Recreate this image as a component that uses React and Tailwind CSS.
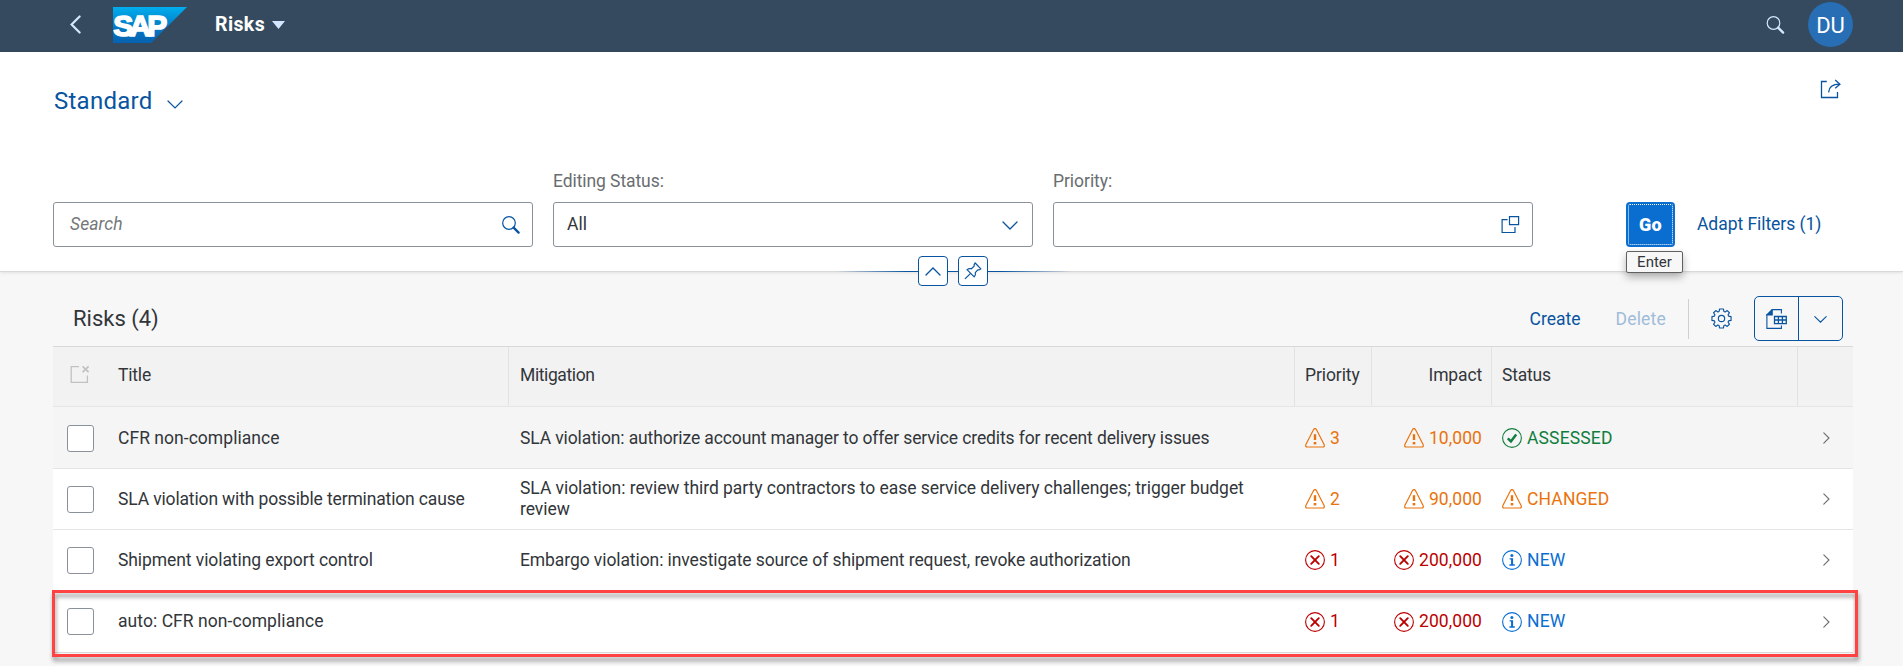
const COLS = "grid grid-cols-[65px_391px_786px_77px_120px_306px_55px]";

function SearchIcon({ className }) {
  return (
    <svg viewBox="0 0 18 18" className={className} fill="none" stroke="currentColor">
      <circle cx="7" cy="7" r="6.3" strokeWidth="1.2" />
      <path d="M11.6 11.6 16.6 16.6" strokeWidth="2.3" strokeLinecap="round" />
    </svg>
  );
}

function Chevron({ className, d = "M1 1 8 8 15 1", box = "0 0 16 9", width = 1.3 }) {
  return (
    <svg viewBox={box} className={className} fill="none" stroke="currentColor" strokeWidth={width} strokeLinecap="round">
      <path d={d} />
    </svg>
  );
}

function SapLogo() {
  return (
    <svg viewBox="0 0 74 36" className="ml-[32px] mt-px h-[36px] w-[74px]">
      <defs>
        <linearGradient id="sap" x1="0" y1="0" x2="0" y2="1">
          <stop offset="0" stopColor="#00aeef" />
          <stop offset="0.25" stopColor="#0297db" />
          <stop offset="0.6" stopColor="#0677c4" />
          <stop offset="1" stopColor="#0662b0" />
        </linearGradient>
      </defs>
      <path d="M0 0H74L38 36H0Z" fill="url(#sap)" />
      <text x="0.2" y="28.6" fill="#fff" stroke="#fff" strokeWidth="1.6" fontFamily="Liberation Sans, sans-serif" fontWeight="700" fontSize="30" textLength="54" lengthAdjust="spacing">SAP</text>
    </svg>
  );
}

function WarningIcon() {
  return (
    <svg viewBox="0 0 20 20" className="size-[20px] shrink-0" fill="none" stroke="currentColor">
      <path d="M8.7 1.3Q10 -0.2 11.3 1.3L19.1 16.6Q19.9 19 17.8 19H2.2Q0.1 19 0.9 16.6Z" strokeWidth="1.2" />
      <path d="M10 6.2V12" strokeWidth="2.4" />
      <path d="M10 14V16.4" strokeWidth="2.6" />
    </svg>
  );
}

function ErrorIcon() {
  return (
    <svg viewBox="0 0 20 20" className="size-[20px] shrink-0" fill="none" stroke="currentColor">
      <circle cx="10" cy="10" r="9.4" strokeWidth="1.1" />
      <path d="M6.2 6.2 13.8 13.8M13.8 6.2 6.2 13.8" strokeWidth="1.9" strokeLinecap="round" />
    </svg>
  );
}

function SuccessIcon() {
  return (
    <svg viewBox="0 0 20 20" className="size-[20px] shrink-0" fill="none" stroke="currentColor">
      <circle cx="10" cy="10" r="9.4" strokeWidth="1.1" />
      <path d="M5.8 10.4 8.9 13.4 14.2 6.4" strokeWidth="2.5" />
    </svg>
  );
}

function InfoIcon() {
  return (
    <svg viewBox="0 0 20 20" className="size-[20px] shrink-0" fill="none" stroke="currentColor">
      <circle cx="10" cy="10" r="9.4" strokeWidth="1.1" />
      <circle cx="9.9" cy="5.6" r="1.5" fill="currentColor" stroke="none" />
      <path d="M7.6 8.9H10.2V14.6M7.4 15H12.8" strokeWidth="1.3" />
      <path d="M10.1 8.6V15" strokeWidth="2" />
    </svg>
  );
}

function ValueHelpIcon() {
  return (
    <svg viewBox="0 0 19 18" className="h-[18px] w-[19px]" fill="none" stroke="currentColor" strokeWidth="1.2">
      <path d="M8.5 0.6H17.6V8.6H8.5Z" />
      <path d="M6.6 3.6H1.1V16.5H14V11" />
    </svg>
  );
}

function ShareIcon() {
  return (
    <svg viewBox="0 0 22 20" className="h-[20px] w-[22px]" fill="none" stroke="currentColor" strokeWidth="1.3">
      <path d="M6.8 2.5H1.5V18.5H17.5V13" />
      <path d="M8.6 13.4Q9 5.2 19.6 5.2" />
      <path d="M15.2 1 19.9 5.2 15.2 9.2" />
    </svg>
  );
}

function PinIcon() {
  return (
    <svg viewBox="0 0 18 18" className="size-[18px]" fill="none" stroke="currentColor" strokeWidth="1.2" strokeLinejoin="round">
      <path d="M11.2 1 16.8 6.8Q15.2 8.4 13.8 7.8L11.3 10.6Q12 13 10.2 14.8L3 7.6Q5 6 7.4 6.8L10.2 4.1Q9.6 2.4 11.2 1Z" />
      <path d="M6.6 11.3 1 16.9" />
    </svg>
  );
}

function GearIcon() {
  return (
    <svg viewBox="0 0 22 22" className="size-[21px]" fill="none" stroke="currentColor" strokeWidth="1.2" strokeLinejoin="round">
      <path d="M9 1H13L13.5 3.6 14.8 4.1 17 2.7 19.3 5 17.9 7.2 18.4 8.5 21 9V13L18.4 13.5 17.9 14.8 19.3 17 17 19.3 14.8 17.9 13.5 18.4 13 21H9L8.5 18.4 7.2 17.9 5 19.3 2.7 17 4.1 14.8 3.6 13.5 1 13V9L3.6 8.5 4.1 7.2 2.7 5 5 2.7 7.2 4.1 8.5 3.6Z" />
      <circle cx="11" cy="11" r="3.3" />
    </svg>
  );
}

function ExportIcon() {
  return (
    <svg viewBox="0 0 21 20" className="h-[20px] w-[21px]" fill="none" stroke="currentColor" strokeWidth="1.1">
      <path d="M5.6 0.6H15.4V4.6M0.9 5V19.4H15.4V16.4" />
      <path d="M0.4 6.4V5.4L5.6 0.2H6.8V6.4Z" fill="currentColor" stroke="none" />
      <path d="M8.5 7.5H20.3V14.6H8.5ZM8.5 11H20.3M12.4 7.5V14.6M16.4 7.5V14.6" strokeWidth="1.3" />
    </svg>
  );
}

function DeselectIcon() {
  return (
    <svg viewBox="0 0 20 19" className="h-[19px] w-[20px]" fill="none" stroke="currentColor" strokeWidth="1.3">
      <path d="M9 1.6H1.2V17.4H17.4V10.5" />
      <path d="M12.6 1.4 18.6 7.2M18.6 1.4 12.6 7.2" strokeWidth="1.7" />
    </svg>
  );
}

const STATES = {
  warning: { Icon: WarningIcon, color: "text-[#e9730c]" },
  error: { Icon: ErrorIcon, color: "text-[#bb0000]" },
  success: { Icon: SuccessIcon, color: "text-[#107e3e]" },
  info: { Icon: InfoIcon, color: "text-[#0a6ed1]" },
};

function ObjectStatus({ state, children, className = "" }) {
  const { Icon, color } = STATES[state];
  return (
    <span className={`flex items-center gap-[5px] ${color} ${className}`}>
      <Icon />
      <span>{children}</span>
    </span>
  );
}

const ROWS = [
  { title: "CFR non-compliance", titleCls: "tracking-[0.04px]", mitigation: "SLA violation: authorize account manager to offer service credits for recent delivery issues", mitCls: "tracking-[-0.12px]", level: "warning", priority: "3", impact: "10,000", state: "success", status: "ASSESSED", row: "h-[62px] bg-[#f5f5f5] border-[#e5e5e5] pt-px" },
  { title: "SLA violation with possible termination cause", titleCls: "tracking-[-0.15px]", mitigation: "SLA violation: review third party contractors to ease service delivery challenges; trigger budget review", mitCls: "tracking-[-0.05px]", level: "warning", priority: "2", impact: "90,000", state: "warning", status: "CHANGED", row: "h-[61px] bg-white border-[#e5e5e5]" },
  { title: "Shipment violating export control", titleCls: "tracking-[-0.08px]", mitigation: "Embargo violation: investigate source of shipment request, revoke authorization", mitCls: "tracking-[-0.09px]", level: "error", priority: "1", impact: "200,000", state: "info", status: "NEW", row: "h-[61px] bg-white border-[#e5e5e5]" },
  { title: "auto: CFR non-compliance", titleCls: "tracking-[0.06px]", mitigation: "", mitCls: "", level: "error", priority: "1", impact: "200,000", state: "info", status: "NEW", row: "h-[62px] bg-white border-[#d9d9d9]" },
];

function TableRow({ r }) {
  return (
    <div className={`${COLS} items-center border-b ${r.row}`}>
      <div className="pl-[14px]">
        <div className="size-[27px] rounded-[3px] border border-[#89919a] bg-white" />
      </div>
      <div className={r.titleCls}>{r.title}</div>
      <div className={`pl-[11px] pr-[30px] leading-[21px] ${r.mitCls}`}>{r.mitigation}</div>
      <ObjectStatus state={r.level} className="pl-[10px]">{r.priority}</ObjectStatus>
      <ObjectStatus state={r.level} className="justify-end pr-[10px] tracking-[0.08px]">{r.impact}</ObjectStatus>
      <ObjectStatus state={r.state} className="pl-[10px] tracking-[0.15px]">{r.status}</ObjectStatus>
      <div className="pl-[25px] text-[#6a6d70]">
        <Chevron className="h-[12px] w-[7px]" box="0 0 7 12" d="M0.8 0.8 6 6 0.8 11.2" width={1.1} />
      </div>
    </div>
  );
}

function Field({ label, children, labelCls = "" }) {
  return (
    <div className="w-[480px]">
      <div className={`h-[31px] leading-[20px] text-[#6a6d70] ${labelCls}`}>{label}</div>
      <div className="flex h-[45px] items-center justify-between rounded-[3px] border border-[#89919a] bg-white">{children}</div>
    </div>
  );
}

export default function App() {
  return (
    <div className="h-[666px] w-[1903px] overflow-hidden bg-[#f7f7f7] font-[Roboto,sans-serif] text-[17.5px] leading-[21px] text-[#32363a]">
      <header className="flex h-[52px] items-center bg-[#354a5f] pb-[3px] text-white">
        <Chevron className="ml-[70px] h-[19px] w-[11px] text-[#d1e8ff]" box="0 0 11 19" d="M9.6 1.5 1.6 9.5 9.6 17.5" width={2.2} />
        <SapLogo />
        <span className="ml-[28px] text-[19.5px] font-bold tracking-[0.4px]">Risks</span>
        <svg viewBox="0 0 13 8" className="ml-[7px] h-[8px] w-[13px] fill-[#d1e8ff]"><path d="M0 0H13L6.5 8Z" /></svg>
        <SearchIcon className="ml-auto h-[18px] w-[19px] text-[#d1e8ff]" />
        <div className="ml-[23px] mr-[50px] flex size-[45px] items-center justify-center rounded-full bg-[#286eb4] pt-px text-[22px]">DU</div>
      </header>

      <section className="relative h-[219px] bg-white shadow-[0_1px_0_#d9d9d9,0_1px_4px_rgba(0,0,0,0.14)]">
        <div className="flex h-[98px] items-center pl-[54px] pr-[61px] text-[#0854a0]">
          <span className="text-[24px] tracking-[0.25px]">Standard</span>
          <Chevron className="ml-[15px] mt-[6px] h-[9px] w-[16px]" width={1.2} />
          <div className="ml-auto mb-[25px]"><ShareIcon /></div>
        </div>
        <div className="flex h-[97px] items-end gap-[20px] pl-[53px]">
          <Field label="">
            <span className="pl-[16px] italic tracking-[0.1px] text-[#74777a]">Search</span>
            <SearchIcon className="mr-[12px] size-[18px] text-[#0854a0]" />
          </Field>
          <Field label="Editing Status:" labelCls="tracking-[-0.08px]">
            <span className="pl-[13px]">All</span>
            <Chevron className="mr-[14px] mt-px h-[9px] w-[16px] text-[#0854a0]" />
          </Field>
          <Field label="Priority:" labelCls="tracking-[-0.05px]">
            <span />
            <span className="mr-[12px] text-[#0854a0]"><ValueHelpIcon /></span>
          </Field>
          <div className="ml-[73px] h-[45px] w-[49px] rounded-[4px] bg-[#0a6ed1] p-[2px]">
            <div className="flex h-full items-center justify-center rounded-[2px] border border-dotted border-white text-[18px] font-black tracking-[0.4px] text-white">Go</div>
          </div>
          <span className="ml-[2px] flex h-[45px] items-center tracking-[-0.05px] text-[#0854a0]">Adapt Filters (1)</span>
        </div>
        <div className="absolute left-[836px] top-[219px] h-px w-[236px] bg-[linear-gradient(90deg,transparent,#0854a0_30%,#0854a0_70%,transparent)]" />
        <div className="absolute left-[918px] top-[204px] flex gap-[10px] text-[#0854a0]">
          <div className="flex size-[30px] items-center justify-center rounded-[4px] border border-[#0854a0] bg-white">
            <Chevron className="h-[9px] w-[16px]" d="M1 8 8 1 15 8" />
          </div>
          <div className="flex size-[30px] items-center justify-center rounded-[4px] border border-[#0854a0] bg-white"><PinIcon /></div>
        </div>
        <div className="absolute left-[1626px] top-[199px] flex h-[22px] w-[57px] items-center justify-center rounded-[2px] border border-[#606060] bg-[#f7f7f7] text-[15px] shadow-[0_4px_8px_rgba(0,0,0,0.3)]">Enter</div>
      </section>

      <main className="mx-[53px] mt-[20px] w-[1800px]">
        <div className="flex h-[55px] items-center pl-[20px] pr-[10px] text-[#0854a0]">
          <h1 className="text-[22px] text-[#32363a]">Risks (4)</h1>
          <span className="ml-auto pt-px">Create</span>
          <span className="ml-[35px] pt-px tracking-[0.2px] text-[#9fbcd9]">Delete</span>
          <div className="ml-[22px] h-[40px] w-px bg-[#d0d0d0]" />
          <span className="ml-[22px]"><GearIcon /></span>
          <div className="ml-[22px] flex h-[45px] w-[89px] rounded-[5px] border border-[#0854a0]">
            <div className="flex w-[44px] items-center justify-center border-r border-[#0854a0]"><ExportIcon /></div>
            <div className="flex flex-1 items-center justify-center pt-[2px]">
              <Chevron className="h-[7px] w-[13px]" box="0 0 13 7" d="M0.8 0.6 6.5 6.2 12.2 0.6" width={1.1} />
            </div>
          </div>
        </div>
        <div className="relative">
          <div className={`${COLS} h-[61px] border-y border-b-[#e5e5e5] border-t-[#d9d9d9] bg-[#f2f2f2]`}>
            <div className="flex items-center pb-[5px] pl-[17px] text-[#bfc1c3]"><DeselectIcon /></div>
            <div className="flex items-center border-r border-[#e2e2e2] pb-[2px] tracking-[-0.2px]">Title</div>
            <div className="flex items-center border-r border-[#e2e2e2] pb-[2px] pl-[11px] tracking-[-0.4px]">Mitigation</div>
            <div className="flex items-center border-r border-[#e2e2e2] pb-[2px] pl-[10px] tracking-[-0.1px]">Priority</div>
            <div className="flex items-center justify-end border-r border-[#e2e2e2] pb-[2px] pr-[9px] tracking-[-0.15px]">Impact</div>
            <div className="flex items-center border-r border-[#e2e2e2] pb-[2px] pl-[10px] tracking-[-0.2px]">Status</div>
            <div />
          </div>
          {ROWS.map((r, i) => <TableRow key={i} r={r} />)}
          <div className="absolute -left-px top-[244px] h-[67px] w-[1806px] border-[3px] border-[#ff4343] drop-shadow-[1px_4px_2px_rgba(0,0,0,0.4)]" />
        </div>
      </main>
    </div>
  );
}
